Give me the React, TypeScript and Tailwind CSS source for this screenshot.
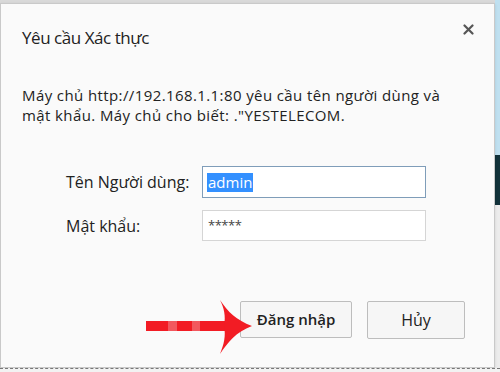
import React from 'react';

const font = { fontFamily: '"Open Sans", "Noto Sans", sans-serif' };

export default function App() {
  return (
    <div className="relative w-[500px] h-[372px] overflow-hidden bg-[#d9d9d9] flex" style={font}>
      {/* Dialog */}
      <div className="relative mt-[3px] w-[495px] h-[365px] bg-[#fafafa] border border-[#c9c9c9] shadow-sm flex flex-col text-[#222]">
        <div className="flex items-start justify-between pl-[21px] pr-[20px] pt-[22px]">
          <h1 className="text-[17px] leading-[24px] tracking-[-0.45px] text-[#222]">Yêu cầu Xác thực</h1>
          <button className="mt-[-2px] text-[#555]">
            <svg width="11" height="11" viewBox="0 0 11 11">
              <path d="M1.5 1.5 L9.5 9.5 M9.5 1.5 L1.5 9.5" stroke="#555" strokeWidth="2.2" strokeLinecap="round" />
            </svg>
          </button>
        </div>

        <p className="mt-[35px] pl-[21px] pr-[40px] text-[15px] leading-[20px] tracking-[0.4px] text-[#222]">
          Máy chủ http://192.168.1.1:80 yêu cầu tên người dùng và mật khẩu. Máy chủ cho biết: ."YESTELECOM.
        </p>

        <div className="mt-[41px] flex flex-col gap-[12px] pl-[65px]">
          <div className="flex items-center">
            <span className="w-[136px] text-[16px]">Tên Người dùng:</span>
            <div className="w-[224px] h-[32px] border border-[#7f9db9] bg-white flex items-center pl-[4px]">
              <span className="bg-[#3390ff] text-white text-[15px] leading-[19px] px-[1px]">admin</span>
            </div>
          </div>
          <div className="flex items-center">
            <span className="w-[136px] text-[16px]">Mật khẩu:</span>
            <div className="w-[224px] h-[31px] border border-[#d5d5d5] bg-white flex items-center pl-[5px] text-[13px] text-[#444] tracking-[-0.5px]">
              *****
            </div>
          </div>
        </div>

        <div className="mt-auto mb-[28px] flex justify-end gap-[15px] pr-[29px]">
          <button className="w-[112px] h-[37px] border border-[#bdbdbd] rounded-[2px] bg-[#f6f6f6] text-[15px] font-semibold text-[#222]">
            Đăng nhập
          </button>
          <button className="w-[98px] h-[38px] border border-[#bdbdbd] rounded-[2px] bg-[#f6f6f6] text-[16px] text-[#222]">
            Hủy
          </button>
        </div>

        {/* Red annotation arrow */}
        <svg className="absolute left-[143px] top-[292px]" width="112" height="62" viewBox="0 0 112 62">
          <rect x="2" y="25" width="80" height="10" fill="#f21c24" />
          <rect x="24" y="25" width="9" height="10" fill="#f2585e" />
          <rect x="48" y="25" width="8" height="10" fill="#f2585e" />
          <path d="M76 4 C84 16 92 24 108 30 C92 36 84 46 76 58 C80 48 82 40 80 30 C82 20 80 12 76 4 Z" fill="#f21c24" />
        </svg>
      </div>

      {/* Background outside the dialog */}
      <div className="flex-1 flex flex-col">
        <div className="h-[155px] bg-[#bfe0f0]" />
        <div className="h-[50px] bg-[#12323a]" />
        <div className="flex-1 bg-[#ececec]" />
      </div>
      <div className="absolute left-0 bottom-0 w-[500px] h-[4px] bg-[#f2f2f2] border-t border-dashed border-[#777]" />
    </div>
  );
}
